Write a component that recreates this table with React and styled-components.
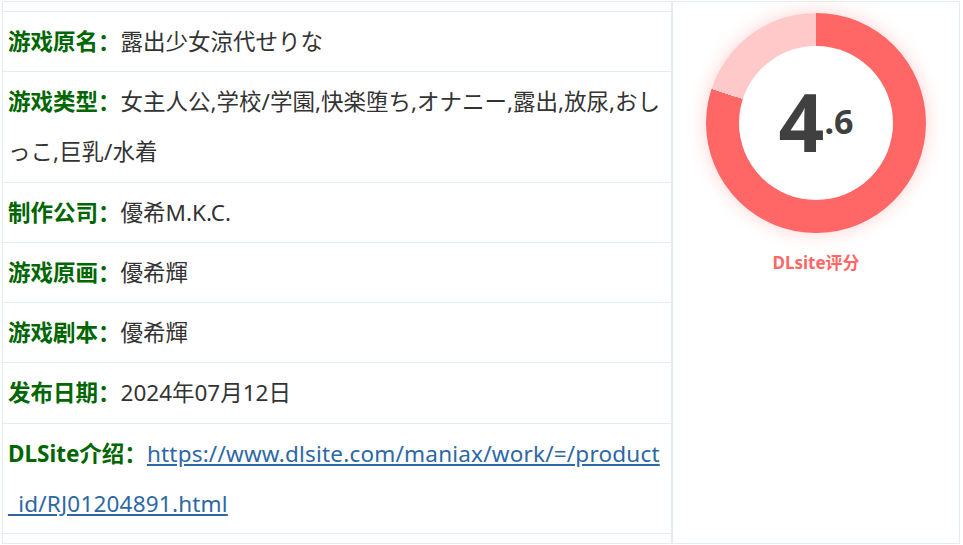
import React from 'react';
import styled, { createGlobalStyle } from 'styled-components';

const GlobalStyle = createGlobalStyle`
  body {
    margin: 0;
    background: #fff;
    font-family: "Noto Sans", "Noto Sans CJK SC", sans-serif;
  }
`;

const rows = [
  { label: '游戏原名：', value: '露出少女涼代せりな' },
  { label: '游戏类型：', value: '女主人公,学校/学園,快楽堕ち,オナニー,露出,放尿,おしっこ,巨乳/水着' },
  { label: '制作公司：', value: '優希M.K.C.' },
  { label: '游戏原画：', value: '優希輝' },
  { label: '游戏剧本：', value: '優希輝' },
  { label: '发布日期：', value: '2024年07月12日' },
  { label: 'DLSite介绍：', link: 'https://www.dlsite.com/maniax/work/=/product_id/RJ01204891.html' },
];

const score = 4.6;

export default function App() {
  const [whole, frac] = score.toFixed(1).split('.');
  return (
    <>
      <GlobalStyle />
      <Page>
        <Table>
          <InfoCell>
            {rows.map((r) => (
              <Row key={r.label}>
                <Label>{r.label}</Label>
                {r.link ? (
                  <Link href={r.link}>{r.link}</Link>
                ) : (
                  <Value lang="zh-CN">{r.value}</Value>
                )}
              </Row>
            ))}
          </InfoCell>
          <ScoreCell>
            <Donut $pct={80}>
              <DonutHole>
                <Big>{whole}</Big>
                <Small>.{frac}</Small>
              </DonutHole>
            </Donut>
            <ScoreLabel>DLsite评分</ScoreLabel>
          </ScoreCell>
        </Table>
      </Page>
    </>
  );
}

const Page = styled.div`
  padding: 1px 3px 0 2px;
`;

const Table = styled.div`
  display: grid;
  grid-template-columns: 670px 288px;
`;

const InfoCell = styled.div`
  border: 1px solid #e3ecf4;
  padding: 9px 0;
`;

const Row = styled.div`
  border-top: 1px solid #e3ecf4;
  padding: 5px 5px 4.3px;
  font-size: 22.5px;
  line-height: 50px;
  color: #333;
  line-break: loose;
  &:last-child {
    border-bottom: 1px solid #e3ecf4;
  }
`;

const Label = styled.span`
  color: #006600;
  font-weight: 700;
`;

const Value = styled.span`
  color: #333;
`;

const Link = styled.a`
  color: #2d68a4;
  text-decoration: underline;
  letter-spacing: 0.2px;
  word-break: break-all;
`;

const ScoreCell = styled.div`
  border: 1px solid #e3ecf4;
  display: flex;
  flex-direction: column;
  align-items: center;
  padding-top: 11px;
`;

const Donut = styled.div`
  width: 220px;
  height: 220px;
  border-radius: 50%;
  background: conic-gradient(#ff6666 0 ${(p) => p.$pct}%, #ffc9c9 0);
  box-shadow: 0 0 18px rgba(255, 102, 102, 0.3);
  display: flex;
  align-items: center;
  justify-content: center;
`;

const DonutHole = styled.div`
  width: 154px;
  height: 154px;
  box-sizing: border-box;
  padding-bottom: 5px;
  border-radius: 50%;
  background: #fff;
  display: flex;
  align-items: center;
  justify-content: center;
  color: #404040;
  font-family: "Noto Sans", sans-serif;
  font-weight: 700;
`;

const Big = styled.span`
  font-size: 80px;
  line-height: 1;
`;

const Small = styled.span`
  font-size: 34px;
  line-height: 1;
`;

const ScoreLabel = styled.div`
  margin-top: 20px;
  color: #ff6666;
  font-weight: 700;
  font-size: 17px;
  line-height: 20px;
`;
